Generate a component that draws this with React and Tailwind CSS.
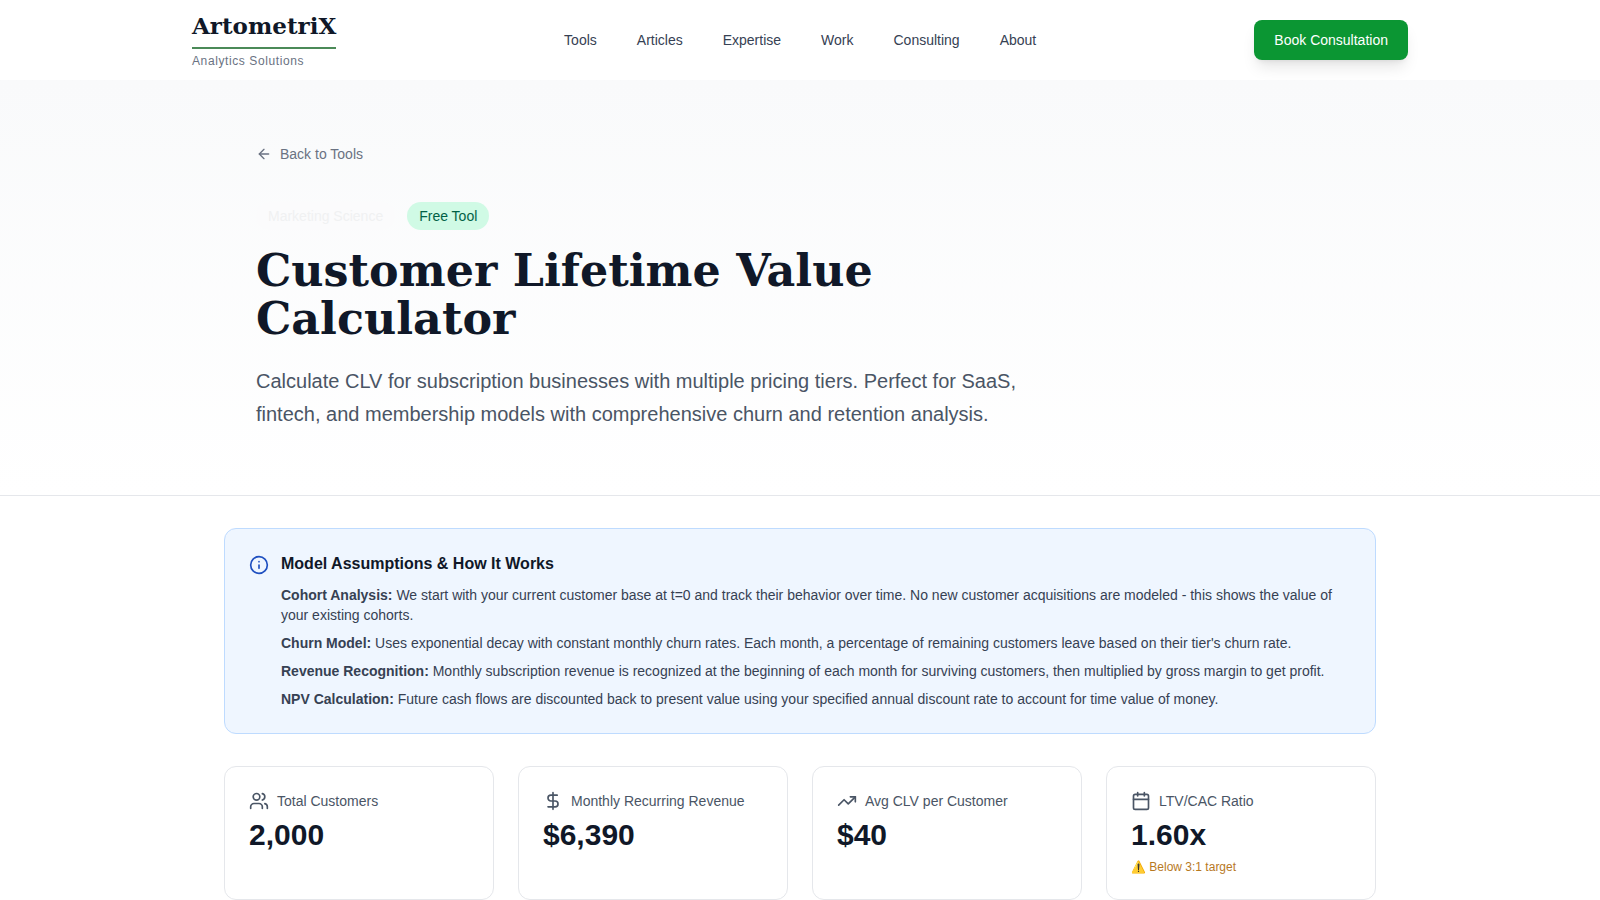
import React from 'react';
import { ArrowLeft, Calendar, DollarSign, Info, TrendingUp, Users } from 'lucide-react';

const navLinks = ['Tools', 'Articles', 'Expertise', 'Work', 'Consulting', 'About'];

const assumptions = [
  ['Cohort Analysis:', 'We start with your current customer base at t=0 and track their behavior over time. No new customer acquisitions are modeled - this shows the value of your existing cohorts.'],
  ['Churn Model:', "Uses exponential decay with constant monthly churn rates. Each month, a percentage of remaining customers leave based on their tier's churn rate."],
  ['Revenue Recognition:', 'Monthly subscription revenue is recognized at the beginning of each month for surviving customers, then multiplied by gross margin to get profit.'],
  ['NPV Calculation:', 'Future cash flows are discounted back to present value using your specified annual discount rate to account for time value of money.'],
];

const stats = [
  { icon: Users, label: 'Total Customers', value: '2,000' },
  { icon: DollarSign, label: 'Monthly Recurring Revenue', value: '$6,390' },
  { icon: TrendingUp, label: 'Avg CLV per Customer', value: '$40' },
  { icon: Calendar, label: 'LTV/CAC Ratio', value: '1.60x', note: '⚠️ Below 3:1 target' },
];

function App() {
  return (
    <div className="min-h-screen bg-white font-['Liberation_Sans',Arial,sans-serif]">
      <header className="bg-white">
        <div className="max-w-7xl mx-auto px-8 h-20 flex items-center justify-between">
          <div className="w-[154px] pb-0.5">
            <div className="w-[144px]">
              <div className="font-['DejaVu_Serif',serif] font-bold text-[23px] leading-8 text-gray-900 whitespace-nowrap">ArtometriX</div>
              <div className="h-0.5 bg-[#4b8a58] mt-[5px]" />
              <div className="text-xs leading-4 mt-1 text-gray-500 tracking-wider whitespace-nowrap">Analytics Solutions</div>
            </div>
          </div>
          <nav className="flex items-center gap-10">
            {navLinks.map((link) => (
              <a key={link} href="#" className="text-sm text-gray-700">{link}</a>
            ))}
          </nav>
          <button className="h-10 px-5 rounded-lg bg-[#0b9633] text-white text-sm shadow-lg">Book Consultation</button>
        </div>
      </header>

      <section className="bg-gradient-to-b from-[#f9fafb] to-white border-b border-gray-200">
        <div className="max-w-6xl mx-auto px-8 pt-16 pb-16">
          <a href="#" className="flex items-center gap-2 text-sm text-gray-500 mb-[38px]">
            <ArrowLeft size={16} />
            Back to Tools
          </a>
          <div className="flex items-center gap-3 mb-4">
            <span className="px-3 py-1 rounded-full text-sm bg-[#fbfbfc] text-[#f0f1f2]">Marketing Science</span>
            <span className="px-3 py-1 rounded-full text-sm bg-emerald-100 text-emerald-800">Free Tool</span>
          </div>
          <h1 className="font-['DejaVu_Serif',serif] font-bold text-[44.4px] leading-12 text-gray-900 max-w-3xl mb-[23px]">Customer Lifetime Value Calculator</h1>
          <p className="text-xl leading-[32.5px] text-gray-600 max-w-3xl pb-px">
            Calculate CLV for subscription businesses with multiple pricing tiers. Perfect for SaaS, fintech, and membership models with comprehensive churn and retention analysis.
          </p>
        </div>
      </section>

      <main className="max-w-6xl mx-auto pt-8">
        <div className="flex gap-3 p-6 rounded-xl bg-blue-50 border border-blue-200 mb-8">
          <Info size={20} className="text-[#1e4fc0] mt-0.5 shrink-0" />
          <div>
            <h3 className="font-semibold text-gray-900 -mt-px mb-[9px]">Model Assumptions &amp; How It Works</h3>
            <div className="space-y-2 text-sm text-gray-700">
              {assumptions.map(([title, body]) => (
                <p key={title}><strong>{title}</strong> {body}</p>
              ))}
            </div>
          </div>
        </div>

        <div className="grid grid-cols-4 gap-6">
          {stats.map(({ icon: Icon, label, value, note }) => (
            <div key={label} className="p-6 rounded-xl bg-white border border-gray-200">
              <div className="flex items-center gap-2 text-sm text-gray-600 mb-1.5">
                <Icon size={20} />
                {label}
              </div>
              <div className="text-3xl font-bold text-gray-900">{value}</div>
              {note && <div className="text-xs text-[#b7791f] mt-1.5">{note}</div>}
            </div>
          ))}
        </div>
      </main>
    </div>
  );
}

export default App;
